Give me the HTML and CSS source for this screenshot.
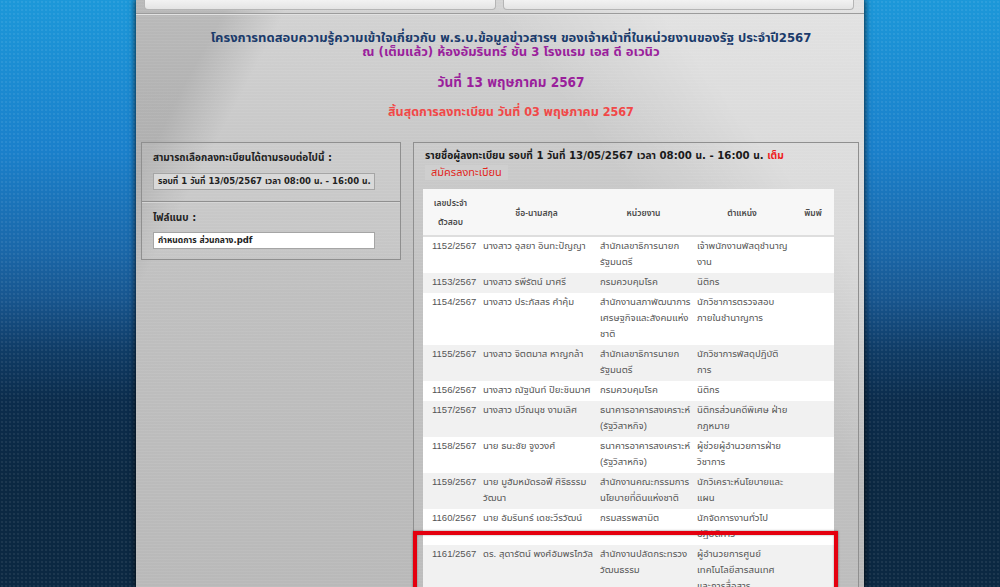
FILE: index.html
```html
<!DOCTYPE html>
<html lang="th">
<head>
  <meta charset="UTF-8" />
  <meta name="viewport" content="width=device-width, initial-scale=1.0"/>
  <title>ลงทะเบียน โครงการทดสอบความรู้ พ.ร.บ.ข้อมูลข่าวสารฯ</title>
  <link rel="stylesheet" href="styles.css">
</head>
<body>

  <div class="page">
    <div class="topbar">
      <div class="tab"></div>
      <div class="tab"></div>
    </div>
    <div class="rule"></div>

    <div class="intro">
      <p class="title">โครงการทดสอบความรู้ความเข้าใจเกี่ยวกับ พ.ร.บ.ข้อมูลข่าวสารฯ ของเจ้าหน้าที่ในหน่วยงานของรัฐ ประจำปี2567</p>
      <p class="venue">ณ (เต็มแล้ว) ห้องอัมรินทร์ ชั้น 3 โรงแรม เอส ดี อเวนิว</p>
      <p class="date">วันที่ 13 พฤษภาคม 2567</p>
      <p class="deadline">สิ้นสุดการลงทะเบียน วันที่ 03 พฤษภาคม 2567</p>
    </div>

    <div class="content">
      <div class="side">
        <div class="side-sec">
          <div class="side-label">สามารถเลือกลงทะเบียนได้ตามรอบต่อไปนี้ :</div>
          <div class="round">รอบที่ 1 วันที่ 13/05/2567 เวลา 08:00 น. - 16:00 น.</div>
        </div>
        <div class="side-sec">
          <div class="side-label">ไฟล์แนบ :</div>
          <div class="file">กำหนดการ ส่วนกลาง.pdf</div>
        </div>
      </div>

      <div class="main">
        <div class="main-head">รายชื่อผู้ลงทะเบียน รอบที่ 1 วันที่ 13/05/2567 เวลา 08:00 น. - 16:00 น. <span class="full">เต็ม</span></div>
        <div class="apply">สมัครลงทะเบียน</div>

        <table class="list">
          <colgroup>
            <col class="c-no"><col class="c-name"><col class="c-org"><col class="c-pos"><col class="c-print">
          </colgroup>
          <thead>
            <tr>
              <th>เลขประจำ<br>ตัวสอบ</th>
              <th>ชื่อ-นามสกุล</th>
              <th>หน่วยงาน</th>
              <th>ตำแหน่ง</th>
              <th>พิมพ์</th>
            </tr>
          </thead>
          <tbody>
            <tr>
              <td>1152/2567</td>
              <td>นางสาว อุสยา อินทะปัญญา</td>
              <td>สำนักเลขาธิการนายก<br>รัฐมนตรี</td>
              <td>เจ้าพนักงานพัสดุชำนาญ<br>งาน</td>
              <td></td>
            </tr>
            <tr>
              <td>1153/2567</td>
              <td>นางสาว รพีรัตน์ มาศรี</td>
              <td>กรมควบคุมโรค</td>
              <td>นิติกร</td>
              <td></td>
            </tr>
            <tr>
              <td>1154/2567</td>
              <td>นางสาว ประภัสสร คำคุ้ม</td>
              <td>สำนักงานสภาพัฒนาการ<br>เศรษฐกิจและสังคมแห่ง<br>ชาติ</td>
              <td>นักวิชาการตรวจสอบ<br>ภายในชำนาญการ</td>
              <td></td>
            </tr>
            <tr>
              <td>1155/2567</td>
              <td>นางสาว จิตตมาส หาญกล้า</td>
              <td>สำนักเลขาธิการนายก<br>รัฐมนตรี</td>
              <td>นักวิชาการพัสดุปฏิบัติ<br>การ</td>
              <td></td>
            </tr>
            <tr>
              <td>1156/2567</td>
              <td>นางสาว ณัฐนันท์ ปิยะชินมาศ</td>
              <td>กรมควบคุมโรค</td>
              <td>นิติกร</td>
              <td></td>
            </tr>
            <tr>
              <td>1157/2567</td>
              <td>นางสาว ปวีณนุช งามเลิศ</td>
              <td>ธนาคารอาคารสงเคราะห์<br>(รัฐวิสาหกิจ)</td>
              <td>นิติกรส่วนคดีพิเศษ ฝ่าย<br>กฎหมาย</td>
              <td></td>
            </tr>
            <tr>
              <td>1158/2567</td>
              <td>นาย ธนะชัย จูงวงศ์</td>
              <td>ธนาคารอาคารสงเคราะห์<br>(รัฐวิสาหกิจ)</td>
              <td>ผู้ช่วยผู้อำนวยการฝ่าย<br>วิชาการ</td>
              <td></td>
            </tr>
            <tr>
              <td>1159/2567</td>
              <td>นาย มูฮัมหมัดรอฟี ศิริธรรม<br>วัฒนา</td>
              <td>สำนักงานคณะกรรมการ<br>นโยบายที่ดินแห่งชาติ</td>
              <td>นักวิเคราะห์นโยบายและ<br>แผน</td>
              <td></td>
            </tr>
            <tr>
              <td>1160/2567</td>
              <td>นาย อัมรินทร์ เดชะวีรวัฒน์</td>
              <td>กรมสรรพสามิต</td>
              <td>นักจัดการงานทั่วไป<br>ปฏิบัติการ</td>
              <td></td>
            </tr>
            <tr>
              <td>1161/2567</td>
              <td>ดร. สุดารัตน์ พงศ์อัมพรไกวัล</td>
              <td>สำนักงานปลัดกระทรวง<br>วัฒนธรรม</td>
              <td>ผู้อำนวยการศูนย์<br>เทคโนโลยีสารสนเทศ<br>และการสื่อสาร</td>
              <td></td>
            </tr>
          </tbody>
        </table>
      </div>
    </div>

    <div class="highlight"></div>
  </div>

</body>
</html>
```

FILE: styles.css
```css
body {
  margin: 0;
  height: 587px;
  overflow: hidden;
  font-family: "Liberation Sans", "Noto Sans Thai", "DejaVu Sans", sans-serif;
  background-color: #0b2843;
  background-image:
    radial-gradient(circle, rgba(255,255,255,0.07) 1px, transparent 1.6px),
    linear-gradient(to bottom, #1c98d9 0, #1a80cb 150px, #1a67a9 250px, #17558e 300px, #0f3c66 350px, #0b2c4c 400px, #0b2842 480px, #0b2842 100%);
  background-size: 4px 4px, 100% 100%;
}

.page {
  position: relative;
  width: 728px;
  height: 587px;
  margin: 0 auto;
  overflow: hidden;
  background-color: #bdbdbd;
  background-image:
    repeating-linear-gradient(0deg, rgba(255,255,255,0.06) 0 1px, transparent 1px 3px),
    linear-gradient(118deg, rgba(0,0,0,0.12) 0 9%, transparent 15%),
    linear-gradient(-128deg, rgba(255,255,255,0.35) 0 18%, transparent 32%),
    linear-gradient(to bottom, #d3d3d3 0, #c8c8c8 140px, #bfbfbf 300px, #b9b9b9 100%);
  box-shadow: 0 0 6px 1px rgba(0, 0, 0, 0.7);
}

/* top menu boxes, cut off by the window */
.topbar {
  display: flex;
  gap: 7px;
  padding: 0 10px 0 8px;
  height: 10px;
}

.tab {
  flex: 1;
  background: linear-gradient(to bottom, #f2f2f2, #e4e4e4);
  border: 1px solid #b5b5b5;
  border-top: none;
  border-radius: 0 0 4px 4px;
}

.rule {
  margin-top: 3px;
  height: 1px;
  background: #9c9c9c;
  border-bottom: 1px solid #e2e2e2;
}

.intro {
  padding: 16px 0 0 22px;
  text-align: center;
  font-family: "DejaVu Sans Condensed", "DejaVu Sans", "Noto Sans Thai", sans-serif;
  font-weight: bold;
}

.intro p {
  margin: 0;
  line-height: 14px;
}

.title {
  font-size: 13px;
  color: #1b3b6b;
}

.venue {
  font-size: 13px;
  color: #9a1f9c;
}

.date {
  margin-top: 16px !important;
  font-size: 13.5px;
  color: #9a1f9c;
}

.deadline {
  margin-top: 16px !important;
  font-size: 12.5px;
  color: #f14848;
}

.content {
  display: flex;
  align-items: flex-start;
  gap: 12px;
  margin-top: 23px;
  padding-left: 5px;
}

.side {
  width: 258px;
  border: 1px solid #8f8f8f;
  background: rgba(255, 255, 255, 0.08);
}

.side-sec {
  padding: 8px 11px 11px;
}

.side-sec + .side-sec {
  border-top: 1px solid #8f8f8f;
  box-shadow: inset 0 1px 0 #d6d6d6;
  padding-top: 9px;
  padding-bottom: 10px;
}

.side-label {
  font-family: "DejaVu Sans", "Noto Sans Thai", sans-serif;
  font-size: 10px;
  font-weight: bold;
  color: #222;
  line-height: 14px;
}

.round, .file {
  width: 216px;
  line-height: 15px;
  padding-left: 4px;
  font-family: "DejaVu Sans", "Noto Sans Thai", sans-serif;
  font-size: 8.5px;
  font-weight: bold;
  color: #222;
}

.round {
  margin-top: 8px;
  background: #d9d9d9;
  border: 1px solid #a5a5a5;
}

.file {
  margin-top: 7px;
  background: #fff;
  border: 1px solid #a5a5a5;
}

.main {
  width: 413px;
  min-height: 460px;
  padding: 6px 22px 0 9px;
  border: 1px solid #8f8f8f;
  background: rgba(255, 255, 255, 0.06);
}

.main-head {
  padding-left: 2px;
  font-family: "DejaVu Sans", "Noto Sans Thai", sans-serif;
  font-size: 10.2px;
  font-weight: bold;
  color: #1a1a1a;
  line-height: 14px;
}

.main-head .full {
  color: #ee1c1c;
}

.apply {
  width: fit-content;
  margin: 2px 0 0 2px;
  padding: 0 6px;
  line-height: 15px;
  background: #cfcfcf;
  color: #e2261c;
  font-family: "DejaVu Sans", "Noto Sans Thai", sans-serif;
  font-size: 11px;
}

.list {
  width: 411px;
  margin-top: 9px;
  border-collapse: collapse;
  table-layout: fixed;
  background: #fff;
  color: #555;
  font-size: 9.6px;
}

.c-no { width: 55px; }
.c-name { width: 117px; }
.c-org { width: 97px; }
.c-pos { width: 100px; }
.c-print { width: 42px; }

.list th {
  padding: 4px 2px;
  line-height: 19px;
  font-family: "Open Sans", "Noto Sans Thai", sans-serif;
  font-size: 8.5px;
  font-weight: 600;
  color: #4a4a4a;
  text-align: center;
  background: #f7f7f7;
  border-bottom: 2px solid #dedede;
}

.list td {
  padding: 1px 5px 3px;
  line-height: 16px;
  vertical-align: top;
  white-space: nowrap;
}

.list td:first-child {
  padding-left: 9px;
  font-size: 9.5px;
}

.list tbody tr:nth-child(even) td {
  background: #f1f1f1;
}

/* red annotation frame drawn over the table */
.highlight {
  position: absolute;
  left: 277px;
  top: 531px;
  width: 417px;
  height: 80px;
  border: 4px solid #e4000f;
  box-shadow: 0 0 2px rgba(0, 0, 0, 0.5), inset 0 0 2px rgba(0, 0, 0, 0.4);
}
```
